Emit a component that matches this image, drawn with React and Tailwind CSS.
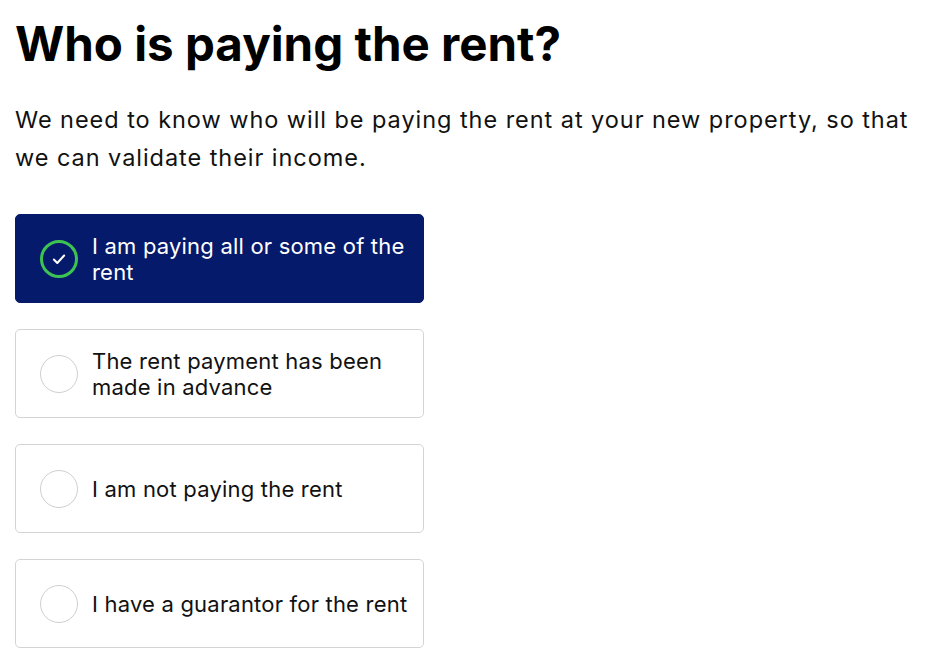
import React from "react";

const options = [
  { label: "I am paying all or some of the rent", selected: true },
  { label: "The rent payment has been made in advance" },
  { label: "I am not paying the rent" },
  { label: "I have a guarantor for the rent" },
];

function Option({ label, selected }) {
  return (
    <button
      type="button"
      className={
        selected
          ? "flex h-[89px] w-[409px] items-center gap-[14px] rounded-[5px] border border-[#061a6b] bg-[#061a6b] pl-[24px] pr-[12px] text-left text-white"
          : "flex h-[89px] w-[409px] items-center gap-[14px] rounded-[5px] border border-[#d4d4d4] bg-white pl-[24px] pr-[12px] text-left text-[#111]"
      }
    >
      <span
        className={
          selected
            ? "flex h-[38px] w-[38px] shrink-0 items-center justify-center rounded-full border-[3px] border-[#3cc352]"
            : "flex h-[38px] w-[38px] shrink-0 items-center justify-center rounded-full border border-[#cfcfcf] bg-white"
        }
      >
        {selected && (
          <svg width="16" height="16" viewBox="0 0 14 14" fill="none">
            <path d="M2.5 7.5l3 3 6-6.5" stroke="white" strokeWidth="1.8" strokeLinecap="round" strokeLinejoin="round" />
          </svg>
        )}
      </span>
      <span className="text-[22px] leading-[26px] tracking-[0.2px]">{label}</span>
    </button>
  );
}

export default function App() {
  return (
    <div className="min-h-screen bg-white px-[15px] pt-[14px] font-['Inter',sans-serif] text-[#111]">
      <h1 className="text-[47.5px] font-bold leading-[60px] text-black">
        Who is paying the rent?
      </h1>
      <p className="mt-[27px] text-[23.5px] leading-[38px] tracking-[0.95px] text-[#111]">
        We need to know who will be paying the rent at your new property, so that we can validate their income.
      </p>
      <div className="mt-[37px] flex flex-col gap-[26px]">
        {options.map((o) => (
          <Option key={o.label} {...o} />
        ))}
      </div>
    </div>
  );
}
